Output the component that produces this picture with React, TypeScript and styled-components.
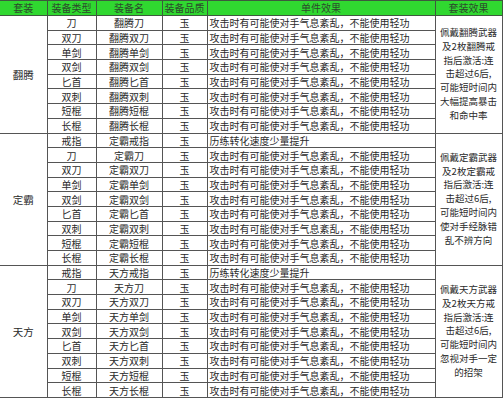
import * as React from "react";
import styled, { createGlobalStyle } from "styled-components";

const GlobalStyle = createGlobalStyle`
  html, body {
    margin: 0;
    padding: 0;
    background: #ffffff;
  }
  body {
    font-family: "Noto Sans CJK SC", "Noto Sans", sans-serif;
  }
`;

const Table = styled.table`
  width: 502px;
  table-layout: fixed;
  border-collapse: collapse;
  font-size: 10px;
  color: #2a2a2a;
  border-right: 1px solid #4a4a4a;
  border-bottom: 1px solid #4a4a4a;
`;

const HeadRow = styled.tr`
  height: 15px;
  background: #30d830;
`;

const HeadCell = styled.th<{ $first?: boolean }>`
  font-weight: normal;
  padding: 0;
  line-height: 14px;
  text-align: center;
  color: #2c4a2c;
  border: 1px solid #3d5a3d;
  border-left: ${(p) => (p.$first ? "none" : "1px solid #3d5a3d")};
`;

const Row = styled.tr`
  height: 14.7px;
`;

const Cell = styled.td<{ $align?: "left" | "center" }>`
  padding: 0 0 0 ${(p) => (p.$align === "left" ? "2px" : "0")};
  line-height: 13px;
  white-space: nowrap;
  overflow: hidden;
  text-align: ${(p) => p.$align ?? "center"};
  border: 1px solid #555555;
`;

const GroupCell = styled.td`
  padding: 0;
  text-align: center;
  vertical-align: middle;
  font-size: 10.5px;
  border-top: 1px solid #555555;
  border-bottom: 1px solid #555555;
  border-right: 1px solid #555555;
`;

const SetCell = styled.td`
  padding: 0;
  text-align: center;
  vertical-align: middle;
  font-size: 9.5px;
  line-height: 13.8px;
  border: 1px solid #555555;
`;

const Line = styled.div`
  white-space: nowrap;
`;

const weapons = ["刀", "双刀", "单剑", "双剑", "匕首", "双刺", "短棍", "长棍"];
const attack = "攻击时有可能使对手气息紊乱，不能使用轻功";
const ringEffect = "历练转化速度少量提升";

type Group = {
  name: string;
  ring: boolean;
  effect: string[];
};

const groups: Group[] = [
  {
    name: "翻腾",
    ring: false,
    effect: ["佩戴翻腾武器", "及2枚翻腾戒", "指后激活:连", "击超过6后,", "可能短时间内", "大幅提高暴击", "和命中率"],
  },
  {
    name: "定霸",
    ring: true,
    effect: ["佩戴定霸武器", "及2枚定霸戒", "指后激活:连", "击超过6后,", "可能短时间内", "使对手经脉错", "乱不辨方向"],
  },
  {
    name: "天方",
    ring: true,
    effect: ["佩戴天方武器", "及2枚天方戒", "指后激活:连", "击超过6后,", "可能短时间内", "忽视对手一定", "的招架"],
  },
];

const headers = ["套装", "装备类型", "装备名", "装备品质", "单件效果", "套装效果"];
const widths = [47, 49, 66, 45, 228, 67];

function GroupRows({ group }: { group: Group }) {
  const items = (group.ring ? ["戒指"] : []).concat(weapons);
  return (
    <>
      {items.map((type, i) => (
        <Row key={type}>
          {i === 0 && <GroupCell rowSpan={items.length}>{group.name}</GroupCell>}
          <Cell>{type}</Cell>
          <Cell>{group.name + type}</Cell>
          <Cell>玉</Cell>
          <Cell $align="left">{type === "戒指" ? ringEffect : attack}</Cell>
          {i === 0 && (
            <SetCell rowSpan={items.length}>
              {group.effect.map((line) => (
                <Line key={line}>{line}</Line>
              ))}
            </SetCell>
          )}
        </Row>
      ))}
    </>
  );
}

export default function App() {
  return (
    <>
      <GlobalStyle />
      <Table>
        <colgroup>
          {widths.map((w, i) => (
            <col key={i} style={{ width: w }} />
          ))}
        </colgroup>
        <thead>
          <HeadRow>
            {headers.map((h, i) => (
              <HeadCell key={h} $first={i === 0}>
                {h}
              </HeadCell>
            ))}
          </HeadRow>
        </thead>
        <tbody>
          {groups.map((g) => (
            <GroupRows key={g.name} group={g} />
          ))}
        </tbody>
      </Table>
    </>
  );
}
